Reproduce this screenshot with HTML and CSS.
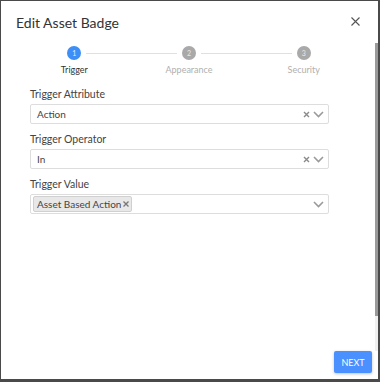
FILE: index.html
```html
<!DOCTYPE html>
<html>
<head>
    <title>Edit Asset Badge</title>
    <link rel="stylesheet" href="styles.css">
</head>
<body>
    <div class="modal">
        <div class="modal-header">
            <h1>Edit Asset Badge</h1>
            <svg class="close" width="9" height="9" viewBox="0 0 9 9"><path d="M0.5 0.5l8 8M8.5 0.5l-8 8" stroke="#555" stroke-width="1.1"/></svg>
        </div>
        <div class="stepper">
            <div class="step active">
                <span class="dot">1</span>
                <span class="step-label">Trigger</span>
            </div>
            <div class="step">
                <span class="dot">2</span>
                <span class="step-label">Appearance</span>
            </div>
            <div class="step">
                <span class="dot">3</span>
                <span class="step-label">Security</span>
            </div>
        </div>
        <form class="form">
            <div class="form-group">
                <label>Trigger Attribute</label>
                <div class="select">
                    <span class="value">Action</span>
                    <svg class="clear" width="7" height="7" viewBox="0 0 7 7"><path d="M1 1l5 5M6 1l-5 5" stroke="#8a8a8a" stroke-width="1.4"/></svg>
                    <svg class="chevron" width="11" height="7" viewBox="0 0 11 7"><path d="M1 1l4.5 4.5L10 1" fill="none" stroke="#9a9a9a" stroke-width="1.6"/></svg>
                </div>
            </div>
            <div class="form-group">
                <label>Trigger Operator</label>
                <div class="select">
                    <span class="value">In</span>
                    <svg class="clear" width="7" height="7" viewBox="0 0 7 7"><path d="M1 1l5 5M6 1l-5 5" stroke="#8a8a8a" stroke-width="1.4"/></svg>
                    <svg class="chevron" width="11" height="7" viewBox="0 0 11 7"><path d="M1 1l4.5 4.5L10 1" fill="none" stroke="#9a9a9a" stroke-width="1.6"/></svg>
                </div>
            </div>
            <div class="form-group">
                <label>Trigger Value</label>
                <div class="select multi">
                    <span class="chip">Asset Based Action <svg class="chip-x" width="6" height="6" viewBox="0 0 6 6"><path d="M0.5 0.5l5 5M5.5 0.5l-5 5" stroke="#777" stroke-width="1.3"/></svg></span>
                    <span class="spacer"></span>
                    <svg class="chevron" width="11" height="7" viewBox="0 0 11 7"><path d="M1 1l4.5 4.5L10 1" fill="none" stroke="#9a9a9a" stroke-width="1.6"/></svg>
                </div>
            </div>
        </form>
        <div class="modal-footer">
            <button type="button">NEXT</button>
        </div>
        <div class="scrollbar"><div class="thumb"></div></div>
    </div>
</body>
</html>
```

FILE: styles.css
```css
body {
    margin: 0;
    background: #4a4a4a;
    font-family: Lato, 'Noto Sans', sans-serif;
    color: #333;
}
.modal {
    position: relative;
    box-sizing: border-box;
    width: 377px;
    height: 378px;
    margin: 1px 0 0 1px;
    background: white;
    display: flex;
    flex-direction: column;
}
.modal-header {
    display: flex;
    justify-content: space-between;
    align-items: center;
    padding: 11px 18px 0 15px;
    height: 20px;
}
h1 {
    margin: 0;
    font-size: 14px;
    font-weight: 400;
    color: #333;
}
.close {
    display: block;
    margin-top: -2px;
}
.stepper {
    display: flex;
    margin: 14px 0 0 0;
    padding: 0 17px 0 16px;
}
.step {
    flex: 1;
    display: flex;
    flex-direction: column;
    align-items: center;
    position: relative;
}
.step + .step::before {
    content: '';
    position: absolute;
    top: 7px;
    left: calc(-50% + 12px);
    right: calc(50% + 12px);
    border-top: 1px solid #e0e0e0;
}
.dot {
    width: 14px;
    height: 14px;
    border-radius: 50%;
    background: #a9a9a9;
    color: #e8e8e8;
    font-size: 7px;
    line-height: 14px;
    text-align: center;
}
.step-label {
    margin-top: 4px;
    font-size: 9px;
    color: #b0b0b0;
}
.step.active .dot {
    background: #3d8ef6;
    color: #dfeeff;
}
.step.active .step-label {
    color: #333;
}
.form {
    padding: 13px 49px 0 29px;
}
.form-group {
    margin-bottom: 9px;
}
label {
    display: block;
    font-size: 10.5px;
    line-height: 13px;
    color: #444;
    margin-bottom: 3px;
}
.select {
    box-sizing: border-box;
    display: flex;
    align-items: center;
    height: 20px;
    border: 1px solid #ddd;
    border-radius: 2px;
    padding: 0 4px 0 6px;
    font-size: 10px;
    color: #444;
}
.value {
    flex: 1;
}
.clear {
    display: block;
    margin-right: 3px;
}
.chevron {
    display: block;
}
.multi {
    padding-left: 2px;
}
.chip {
    display: flex;
    align-items: center;
    gap: 2px;
    background: #e8e8e8;
    border: 1px solid #d0d0d0;
    border-radius: 2px;
    padding: 1px 2px 1px 3px;
    font-size: 10px;
    color: #444;
}
.chip-x {
    display: block;
}
.spacer {
    flex: 1;
}
.modal-footer {
    margin-top: auto;
    display: flex;
    justify-content: flex-end;
    padding: 0 6px 6px 0;
}
button {
    background: #4a90ff;
    color: white;
    border: none;
    border-radius: 2px;
    font-family: Lato, sans-serif;
    font-size: 9px;
    width: 38px;
    height: 22px;
    padding: 0;
    box-shadow: 0 1px 3px rgba(0,0,0,0.25);
}
.scrollbar {
    position: absolute;
    right: 0;
    top: 42px;
    width: 3px;
    height: 308px;
    background: #f0f0f0;
}
.thumb {
    height: 273px;
    background: #9a9a9a;
}
```
